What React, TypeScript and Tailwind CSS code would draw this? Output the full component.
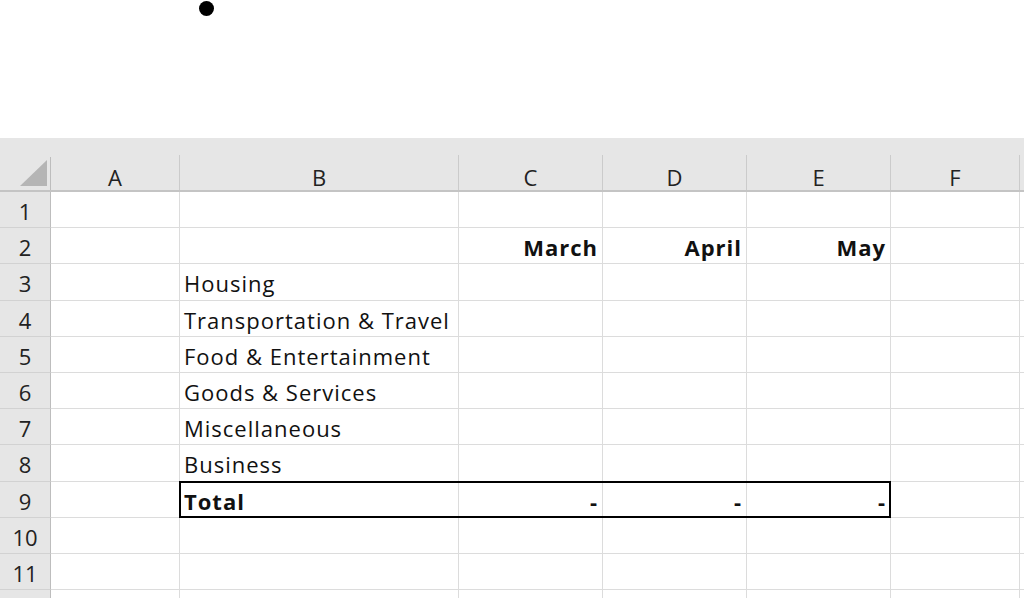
import React from "react";

const cols = [
  { key: "A", w: "w-[129px]" },
  { key: "B", w: "w-[279px]" },
  { key: "C", w: "w-[144px]" },
  { key: "D", w: "w-[144px]" },
  { key: "E", w: "w-[144px]" },
  { key: "F", w: "w-[129px]" },
];

type Cell = { text?: string; bold?: boolean; right?: boolean };

const rows: Cell[][] = [
  [{}, {}, {}, {}, {}, {}],
  [{}, {}, { text: "March", bold: true, right: true }, { text: "April", bold: true, right: true }, { text: "May", bold: true, right: true }, {}],
  [{}, { text: "Housing" }, {}, {}, {}, {}],
  [{}, { text: "Transportation & Travel" }, {}, {}, {}, {}],
  [{}, { text: "Food & Entertainment" }, {}, {}, {}, {}],
  [{}, { text: "Goods & Services" }, {}, {}, {}, {}],
  [{}, { text: "Miscellaneous" }, {}, {}, {}, {}],
  [{}, { text: "Business" }, {}, {}, {}, {}],
  [{}, { text: "Total", bold: true }, { text: "-", bold: true, right: true }, { text: "-", bold: true, right: true }, { text: "-", bold: true, right: true }, {}],
  [{}, {}, {}, {}, {}, {}],
  [{}, {}, {}, {}, {}, {}],
  [{}, {}, {}, {}, {}, {}],
];

export default function App() {
  return (
    <div
      className="w-[1024px] h-[598px] overflow-hidden bg-white text-[#111]"
      style={{ fontFamily: "'Open Sans', Lato, sans-serif" }}
    >
      <div className="h-[138px] relative">
        <div className="absolute left-[199px] top-[1px] w-[15px] h-[15px] rounded-full bg-black" />
      </div>
      {/* header row */}
      <div className="flex h-[54px] bg-[#e6e6e6] border-b-2 border-[#c4c4c4]">
        <div className="w-[51px] shrink-0 flex items-end border-r border-[#bdbdbd] mt-[19px] relative">
          <svg width="51" height="35" className="block">
            <polygon points="20,31 47,5 47,31" fill="#b5b5b5" />
          </svg>
        </div>
        {cols.map((c) => (
          <div key={c.key} className={`${c.w} shrink-0 flex items-end`}>
            <div className="h-[35px] w-full border-r border-[#cbcbcb] flex items-center justify-center text-[22px] leading-none text-[#222] pt-[8px]">
              {c.key}
            </div>
          </div>
        ))}
        <div className="flex-1 flex items-end">
          <div className="h-[35px] w-full" />
        </div>
      </div>
      {/* body rows */}
      {rows.map((r, i) => (
        <div key={i} className="flex h-[36.2px]">
          <div className="w-[51px] shrink-0 bg-[#e6e6e6] border-r border-b border-r-[#bdbdbd] border-b-[#d2d2d2] flex items-center justify-center text-[22px] leading-none text-[#222] pt-[3px]">
            {i < 11 ? i + 1 : ""}
          </div>
          {r.map((cell, j) => {
            const isTotal = i === 8 && j >= 1 && j <= 4;
            return (
              <div
                key={j}
                className={`${cols[j].w} shrink-0 border-r border-b border-[#dcdcdc] flex items-center px-[4px] pt-[3px] text-[22px] tracking-[1px] leading-none whitespace-nowrap relative ${
                  cell.right ? "justify-end" : "justify-start"
                } ${cell.bold ? "font-bold" : ""}`}
              >
                {isTotal && (
                  <div
                    className={`absolute top-[-1px] bottom-[-1px] left-[-1px] right-[-1px] border-black border-y-2 ${
                      j === 1 ? "border-l-2" : ""
                    } ${j === 4 ? "border-r-2" : ""} pointer-events-none`}
                  />
                )}
                <span className="relative">{cell.text}</span>
              </div>
            );
          })}
          <div className="flex-1 border-b border-[#dcdcdc]" />
        </div>
      ))}
    </div>
  );
}
